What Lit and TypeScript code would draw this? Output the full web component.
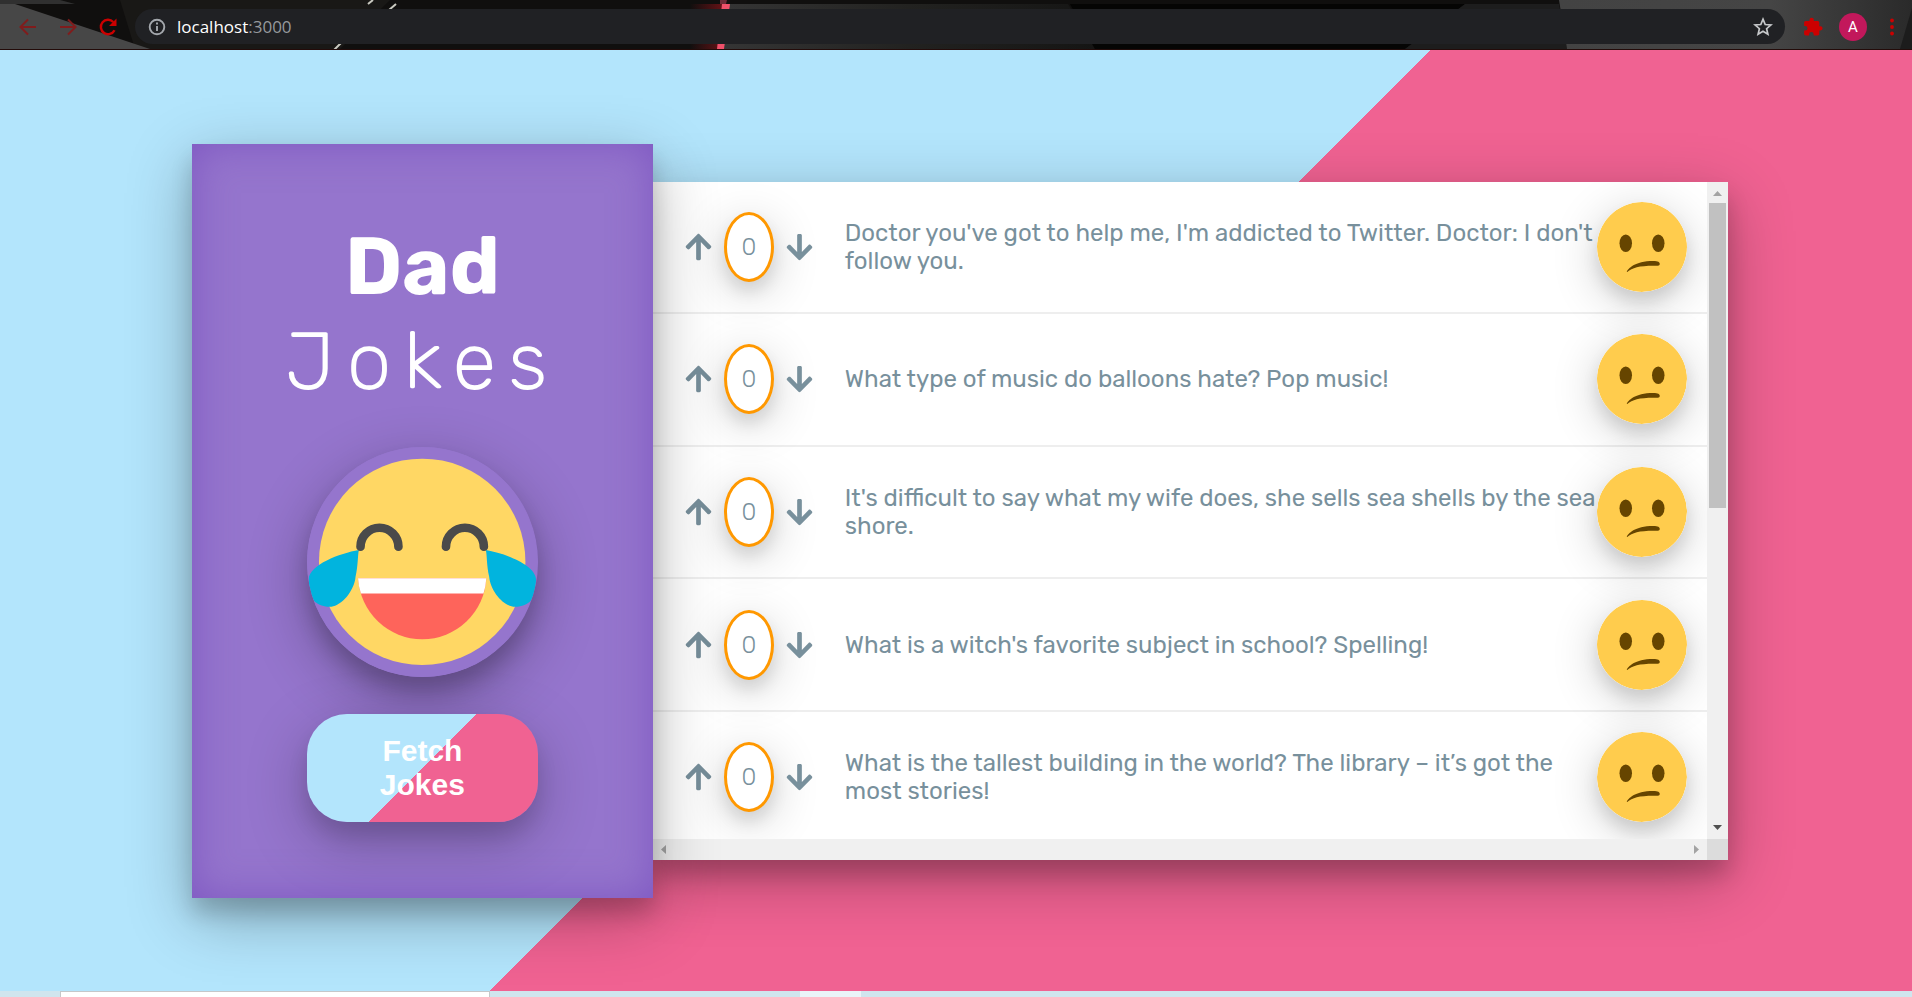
import { LitElement, html, css, svg } from "lit";
import { customElement, state, property } from "lit/decorators.js";

interface Joke {
  text: string;
  votes: number;
}

@customElement("browser-bar")
export class BrowserBar extends LitElement {
  static styles = css`
    :host {
      display: block;
      position: relative;
      height: 50px;
      box-sizing: border-box;
      background: #100f0e;
      border-bottom: 1px solid #230b09;
      overflow: hidden;
    }
    .theme {
      position: absolute;
      inset: 0;
      width: 100%;
      height: 100%;
    }
    .row {
      position: relative;
      display: flex;
      align-items: center;
      height: 35px;
      margin-top: 9px;
      padding: 0 8px 0 16px;
    }
    .icon {
      display: grid;
      place-items: center;
      width: 24px;
      height: 24px;
      padding: 0;
      border: 0;
      background: none;
      color: #cc0000;
      flex: none;
    }
    .icon + .icon {
      margin-left: 16px;
    }
    .icon svg {
      width: 24px;
      height: 24px;
    }
    .dim {
      color: #801c1c;
    }
    .pill {
      display: flex;
      align-items: center;
      flex: 1;
      min-width: 0;
      height: 35px;
      margin: 0 16px 0 15px;
      padding: 0 10px 0 10px;
      border-radius: 18px;
      background: #202124;
      box-sizing: border-box;
    }
    .pill .icon {
      color: #a4a8ad;
    }
    .pill .star {
      color: #c6c8ca;
    }
    .url {
      flex: 1;
      margin-left: 8px;
      color: #fff;
      font: 17px/24px "Segoe UI", "Open Sans", sans-serif;
      outline: none;
    }
    .port {
      color: #96999d;
    }
    .avatar {
      width: 28px;
      height: 28px;
      margin: 0 13px 0 14px;
      padding: 0;
      border: 0;
      border-radius: 50%;
      background: #c2185b;
      color: #fff;
      font: 15px/28px Roboto, sans-serif;
      flex: none;
    }
  `;

  render() {
    return html`
      <svg class="theme" viewBox="0 0 1912 49" preserveAspectRatio="none" aria-hidden="true">
        <defs>
          <linearGradient id="glow">
            <stop offset="0" stop-color="#100f0e" />
            <stop offset="1" stop-color="#6b1216" />
          </linearGradient>
          <linearGradient id="mid">
            <stop offset="0" stop-color="#353535" />
            <stop offset="0.5" stop-color="#222220" />
            <stop offset="1" stop-color="#151514" />
          </linearGradient>
          <linearGradient id="right">
            <stop offset="0" stop-color="#434343" />
            <stop offset="0.6" stop-color="#454545" />
            <stop offset="1" stop-color="#2a2a2a" />
          </linearGradient>
        </defs>
        <path d="M120 0H390L340 49H135z" fill="#191816" />
        <path d="M0 4H15L150 49H0z" fill="#474747" />
        <path d="M60 0L75 4H0V0z" fill="#303030" />
        <path d="M690 4h35v45h-35z" fill="url(#glow)" />
        <path d="M728 4H1068L1095 49H722z" fill="url(#mid)" />
        <path d="M722 4h8l-6 45h-7z" fill="#f0506a" />
        <path d="M720 0h7l-1 4h-6z" fill="#6e2c38" />
        <path d="M1070 4H1465L1405 49H1095z" fill="#050504" />
        <path d="M1465 4H1559L1567 49H1405z" fill="#1d1d1d" />
        <path d="M1559 0H1912V49H1567z" fill="url(#right)" />
        <path d="M1912 8V49H1900z" fill="#1c1c1c" />
        <path d="M396 4l-7 6M373 0l-5 4M341 43l-7 7" stroke="#c9c9c0" stroke-width="2" />
      </svg>
      <nav class="row" aria-label="Browser">
        <button class="icon dim" aria-label="Back">
          <svg viewBox="0 0 24 24" fill="none" stroke="currentColor" stroke-width="2"><path d="M20 12H5M12 4.500L4.500 12l7.500 7.500" /></svg>
        </button>
        <button class="icon dim" aria-label="Forward">
          <svg viewBox="0 0 24 24" fill="none" stroke="currentColor" stroke-width="2"><path d="M4 12h15M12 4.500L19.500 12 12 19.500" /></svg>
        </button>
        <button class="icon" aria-label="Reload">
          <svg viewBox="0 0 24 24"><path fill="none" stroke="currentColor" stroke-width="2.400" d="M18.500 15.200A7.200 7.200 0 1 1 17.300 7" /><path fill="currentColor" d="M20.500 3.500V11H13z" /></svg>
        </button>
        <div class="pill">
          <button class="icon" aria-label="Site information">
            <svg viewBox="0 0 24 24" fill="none" stroke="currentColor" stroke-width="1.900"><circle cx="12" cy="12" r="7.300" /><path d="M12 11v5M12 7.600v2" /></svg>
          </button>
          <div class="url" role="textbox" aria-label="Address" tabindex="0">localhost<span class="port">:3000</span></div>
          <button class="icon star" aria-label="Bookmark">
            <svg viewBox="0 0 24 24" fill="none" stroke="currentColor" stroke-width="1.700"><path d="M12 4.200l2.200 5.300 5.700.5-4.300 3.700 1.300 5.600-4.900-3-4.900 3 1.300-5.600L4.100 10l5.700-.5z" /></svg>
          </button>
        </div>
        <button class="icon" aria-label="Extensions">
          <svg viewBox="0 0 24 24" fill="currentColor"><path d="M19.500 11.200H18.300V7.600c0-1-.8-1.700-1.700-1.700h-3.800V4.800a2.100 2.100 0 0 0-4.300 0v1.100H4.800c-1 0-1.700.8-1.700 1.700v3.300h1.100a2.300 2.300 0 0 1 0 4.600H3.100v3.300c0 1 .8 1.700 1.700 1.700h3.300v-1.100a2.300 2.300 0 0 1 4.600 0v1.100h3.900c1 0 1.700-.8 1.700-1.700v-3.400h1.200a2.100 2.100 0 0 0 0-4.200z" /></svg>
        </button>
        <button class="avatar" aria-label="Profile">A</button>
        <button class="icon" aria-label="Menu">
          <svg viewBox="0 0 24 24" fill="currentColor"><circle cx="12" cy="5.500" r="1.900" /><circle cx="12" cy="12" r="1.900" /><circle cx="12" cy="18.500" r="1.900" /></svg>
        </button>
      </nav>
    `;
  }
}

@customElement("joke-row")
export class JokeRow extends LitElement {
  @property({ attribute: false }) joke: Joke = { text: "", votes: 0 };

  static styles = css`
    :host {
      display: flex;
      align-items: center;
      box-sizing: border-box;
      padding: 0 20px 0 30px;
      border-bottom: 2px solid #eeeeee;
      color: #78909c;
      font: 400 24px/28px Rubik, Roboto, sans-serif;
    }
    .votes {
      display: flex;
      align-items: center;
      gap: 10px;
      flex: none;
    }
    .vote {
      display: grid;
      place-items: center;
      width: 31px;
      height: 30px;
      padding: 0;
      border: 0;
      background: none;
      color: inherit;
    }
    .vote svg {
      width: 27px;
      height: 30px;
    }
    .count {
      display: grid;
      place-items: center;
      box-sizing: border-box;
      width: 50px;
      height: 70px;
      border: 3px solid #ff9800;
      border-radius: 50%;
      font-weight: 300;
      background: #fff;
      box-shadow: 0 10px 48px rgba(0, 0, 0, 0.2), 0 10px 16px rgba(0, 0, 0, 0.1);
    }
    .text {
      flex: 1;
      margin: 0 0 0 30px;
    }
    .face {
      width: 90px;
      height: 90px;
      flex: none;
      border-radius: 50%;
      box-shadow: 0 10px 48px rgba(0, 0, 0, 0.2), 0 10px 16px rgba(0, 0, 0, 0.1);
    }
  `;

  private vote(delta: number) {
    this.joke = { ...this.joke, votes: this.joke.votes + delta };
  }

  render() {
    const arrow = svg`<path fill="currentColor" d="M34.900 289.500l-22.200-22.200c-9.400-9.400-9.400-24.600 0-33.900L207 39c9.400-9.400 24.600-9.400 33.900 0l194.300 194.300c9.400 9.400 9.400 24.600 0 33.900L413 289.400c-9.500 9.500-25 9.300-34.300-.4L264 168.600V456c0 13.300-10.700 24-24 24h-32c-13.300 0-24-10.700-24-24V168.600L69.200 289.100c-9.300 9.800-24.800 10-34.300.4z" />`;
    return html`
      <div class="votes">
        <button class="vote" aria-label="Vote up" @click=${() => this.vote(1)}>
          <svg viewBox="0 0 448 512">${arrow}</svg>
        </button>
        <span class="count">${this.joke.votes}</span>
        <button class="vote" aria-label="Vote down" @click=${() => this.vote(-1)}>
          <svg viewBox="0 0 448 512"><g transform="rotate(180 224 256)">${arrow}</g></svg>
        </button>
      </div>
      <p class="text">${this.joke.text}</p>
      <svg class="face" viewBox="0 0 36 36" role="img" aria-label="Confused face">
        <circle cx="18" cy="18" r="18" fill="#ffcc4d" />
        <ellipse cx="11.500" cy="16.500" rx="2.500" ry="3.500" fill="#664500" />
        <ellipse cx="24.500" cy="16.500" rx="2.500" ry="3.500" fill="#664500" />
        <path fill="#664500" d="M11.900 27.900C12.300 26.800 15 23.600 22.500 23.600 24.500 23.600 25.100 24 25.100 24.800 25.100 25.500 24.500 25.500 23.800 25.500 17 25.400 14.300 26.200 12.100 28z" />
      </svg>
    `;
  }
}

@customElement("app-root")
export class AppRoot extends LitElement {
  @state() private jokes: Joke[] = [
    { text: "Doctor you've got to help me, I'm addicted to Twitter. Doctor: I don't follow you.", votes: 0 },
    { text: "What type of music do balloons hate? Pop music!", votes: 0 },
    { text: "It's difficult to say what my wife does, she sells sea shells by the sea shore.", votes: 0 },
    { text: "What is a witch's favorite subject in school? Spelling!", votes: 0 },
    { text: "What is the tallest building in the world? The library – it’s got the most stories!", votes: 0 },
  ];

  static styles = css`
    :host {
      display: flex;
      flex-direction: column;
      height: 100vh;
      overflow: hidden;
    }
    .page {
      flex: 1;
      min-height: 0;
      display: grid;
      grid-template-columns: 3fr 7fr;
      align-items: center;
      padding: 0 184px 0 192px;
      background: linear-gradient(135deg, #b3e5fc 50%, #f06292 0) 0 0 / calc(100% + 8px) 100%;
    }
    .sidebar {
      position: relative;
      z-index: 2;
      box-sizing: border-box;
      height: 754px;
      display: flex;
      flex-direction: column;
      align-items: center;
      justify-content: center;
      background: #9575cd;
      box-shadow: 0 19px 60px rgba(0, 0, 0, 0.3), 0 15px 20px rgba(0, 0, 0, 0.16),
        inset 0 0 40px rgba(103, 58, 183, 0.5);
    }
    .title {
      margin: 0;
      text-align: center;
      color: #fff;
      font: 300 80px/95px Rubik, Inter, sans-serif;
      letter-spacing: 12px;
    }
    .title span {
      display: block;
      font-weight: 700;
      letter-spacing: 0;
    }
    .laugh {
      width: 50%;
      margin: 38px 0 37px;
      border-radius: 50%;
      box-shadow: 0 19px 60px rgba(0, 0, 0, 0.3), 0 15px 20px rgba(0, 0, 0, 0.16);
    }
    .fetch {
      width: 50%;
      box-sizing: border-box;
      padding: 20px 60px;
      border: 0;
      border-radius: 40px;
      background: linear-gradient(135deg, #b3e5fc 50%, #f06292 0);
      color: #fff;
      font: 700 30px/34px "Liberation Sans", Arial, sans-serif;
      box-shadow: 0 19px 60px rgba(0, 0, 0, 0.25), 0 15px 20px rgba(0, 0, 0, 0.1);
    }
    .panel {
      display: grid;
      grid-template: minmax(0, 1fr) 21px / minmax(0, 1fr) 21px;
      height: 678px;
      background: #fff;
      box-shadow: 0 19px 60px rgba(0, 0, 0, 0.3), 0 15px 20px rgba(0, 0, 0, 0.16);
    }
    .jokes {
      overflow: hidden;
    }
    .list {
      display: grid;
      grid-auto-rows: 1fr;
      min-height: 663px;
    }
    .track {
      display: flex;
      align-items: center;
      justify-content: space-between;
      background: #f0f0f0;
    }
    .track.tall {
      flex-direction: column;
      justify-content: flex-start;
    }
    .track svg {
      width: 21px;
      height: 21px;
      flex: none;
    }
    .thumb {
      width: 17px;
      height: 46.5%;
      margin-bottom: auto;
      background: #c1c1c1;
    }
    .corner {
      background: #dcdcdc;
    }
    .taskbar {
      display: flex;
      height: 6px;
      flex: none;
      background: #d0e5ee;
    }
    .search {
      width: 430px;
      margin-left: 60px;
      box-sizing: border-box;
      border: 1px solid #c4c8ca;
      border-bottom: 0;
      background: #fff;
    }
    .task {
      width: 61px;
      margin-left: 310px;
      background: #eaf4f8;
    }
  `;

  private fetchJokes() {
    this.jokes = [...this.jokes];
  }

  render() {
    const tear = "M237 360C180 370 88 404 86 448 87 475 93 500 103 514 120 530 148 533 160 529 192 520 224 478 227 440 235 405 233 380 237 360z";
    return html`
      <browser-bar></browser-bar>
      <main class="page">
        <section class="sidebar">
          <h1 class="title"><span>Dad</span> Jokes</h1>
          <svg class="laugh" viewBox="81 50 693 691" role="img" aria-label="Laughing face">
            <circle cx="427.500" cy="395.500" r="347" fill="#9575cd" />
            <circle cx="427.500" cy="395.500" r="310.500" fill="#ffd764" />
            <path d="M235 445H620.500A193 193 0 0 1 235 445z" fill="#fe645b" />
            <path d="M234.500 445H620.500Q619 470 612 491H243Q236 470 234.500 445z" fill="#fff" />
            <path d=${tear} fill="#01b4de" />
            <path d=${tear} fill="#01b4de" transform="translate(856 0) scale(-1 1)" />
            <path d="M242 350A57 57 0 0 1 356 350M499 350A57 57 0 0 1 613 350" fill="none" stroke="#4a4a4a" stroke-width="26" stroke-linecap="round" />
          </svg>
          <button class="fetch" @click=${this.fetchJokes}>Fetch Jokes</button>
        </section>
        <section class="panel">
          <div class="jokes">
            <div class="list">
              ${this.jokes.map((joke) => html`<joke-row .joke=${joke}></joke-row>`)}
            </div>
          </div>
          <div class="track tall" aria-hidden="true">
            <svg viewBox="0 0 21 21"><path d="M6 14l4.500-5 4.500 5z" fill="#a3a3a3" /></svg>
            <div class="thumb"></div>
            <svg viewBox="0 0 21 21"><path d="M6 7l4.500 5 4.500-5z" fill="#505050" /></svg>
          </div>
          <div class="track" aria-hidden="true">
            <svg viewBox="0 0 21 21"><path d="M13 6l-5 4.500 5 4.500z" fill="#a3a3a3" /></svg>
            <svg viewBox="0 0 21 21"><path d="M8 6l5 4.500-5 4.500z" fill="#a3a3a3" /></svg>
          </div>
          <div class="corner"></div>
        </section>
      </main>
      <footer class="taskbar" aria-hidden="true">
        <div class="search"></div>
        <div class="task"></div>
      </footer>
    `;
  }
}
